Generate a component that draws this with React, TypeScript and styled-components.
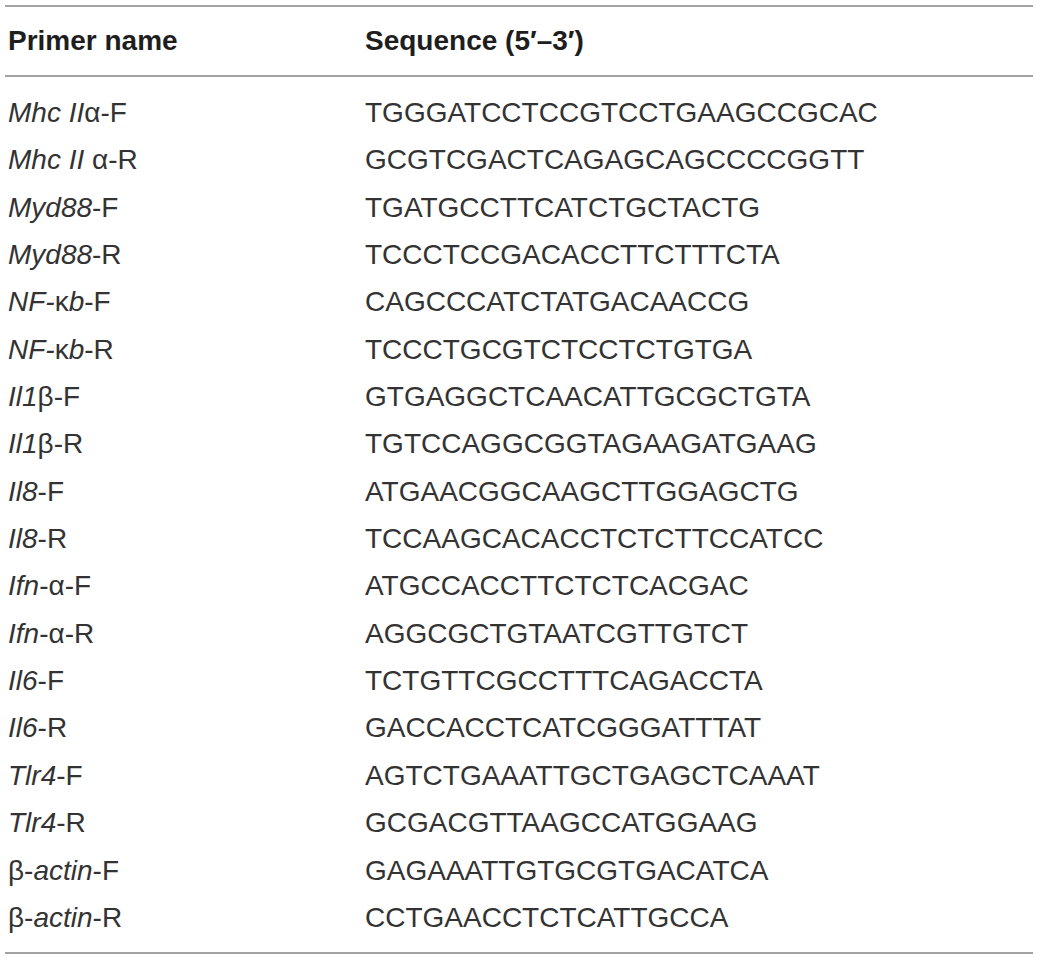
import React from "react";
import styled, { createGlobalStyle } from "styled-components";

const Global = createGlobalStyle`
  html, body { margin: 0; padding: 0; background: #ffffff; }
  body { font-family: "Liberation Sans", Arial, sans-serif; color: #231f20; }
`;

const Page = styled.div`
  padding: 5px 6px 0 5px;
  width: 1039px;
  box-sizing: border-box;
`;

const Table = styled.div`
  border-top: 2px solid #a3a3a3;
  border-bottom: 2px solid #a3a3a3;
`;

const Grid = styled.div`
  display: grid;
  grid-template-columns: 357px 1fr;
  align-items: center;
`;

const HeaderRow = styled(Grid)`
  height: 68px;
  border-bottom: 2px solid #a3a3a3;
`;

const HeadCell = styled.div`
  font-weight: 700;
  font-size: 28px;
  line-height: 68px;
  padding-left: 3px;
  color: #1e1e1e;
  white-space: nowrap;
`;

const Body = styled.div`
  padding: 12px 0 11px;
`;

const Row = styled(Grid)`
  height: 47.35px;
`;

const Cell = styled.div`
  font-size: 28px;
  line-height: 47.35px;
  padding-left: 3px;
  color: #333333;
  white-space: nowrap;
`;

const It = styled.i`
  font-style: italic;
`;

type Primer = { name: React.ReactNode; seq: string };

const primers: Primer[] = [
  { name: <><It>Mhc II</It>α-F</>, seq: "TGGGATCCTCCGTCCTGAAGCCGCAC" },
  { name: <><It>Mhc II</It> α-R</>, seq: "GCGTCGACTCAGAGCAGCCCCGGTT" },
  { name: <><It>Myd88</It>-F</>, seq: "TGATGCCTTCATCTGCTACTG" },
  { name: <><It>Myd88</It>-R</>, seq: "TCCCTCCGACACCTTCTTTCTA" },
  { name: <><It>NF-</It>κ<It>b</It>-F</>, seq: "CAGCCCATCTATGACAACCG" },
  { name: <><It>NF-</It>κ<It>b</It>-R</>, seq: "TCCCTGCGTCTCCTCTGTGA" },
  { name: <><It>Il1</It>β-F</>, seq: "GTGAGGCTCAACATTGCGCTGTA" },
  { name: <><It>Il1</It>β-R</>, seq: "TGTCCAGGCGGTAGAAGATGAAG" },
  { name: <><It>Il8</It>-F</>, seq: "ATGAACGGCAAGCTTGGAGCTG" },
  { name: <><It>Il8</It>-R</>, seq: "TCCAAGCACACCTCTCTTCCATCC" },
  { name: <><It>Ifn</It>-α-F</>, seq: "ATGCCACCTTCTCTCACGAC" },
  { name: <><It>Ifn</It>-α-R</>, seq: "AGGCGCTGTAATCGTTGTCT" },
  { name: <><It>Il6</It>-F</>, seq: "TCTGTTCGCCTTTCAGACCTA" },
  { name: <><It>Il6</It>-R</>, seq: "GACCACCTCATCGGGATTTAT" },
  { name: <><It>Tlr4</It>-F</>, seq: "AGTCTGAAATTGCTGAGCTCAAAT" },
  { name: <><It>Tlr4</It>-R</>, seq: "GCGACGTTAAGCCATGGAAG" },
  { name: <>β-<It>actin</It>-F</>, seq: "GAGAAATTGTGCGTGACATCA" },
  { name: <>β-<It>actin</It>-R</>, seq: "CCTGAACCTCTCATTGCCA" },
];

export default function App() {
  return (
    <>
      <Global />
      <Page>
        <Table>
          <HeaderRow>
            <HeadCell>Primer name</HeadCell>
            <HeadCell>Sequence (5′–3′)</HeadCell>
          </HeaderRow>
          <Body>
            {primers.map((p, i) => (
              <Row key={i}>
                <Cell>{p.name}</Cell>
                <Cell>{p.seq}</Cell>
              </Row>
            ))}
          </Body>
        </Table>
      </Page>
    </>
  );
}
